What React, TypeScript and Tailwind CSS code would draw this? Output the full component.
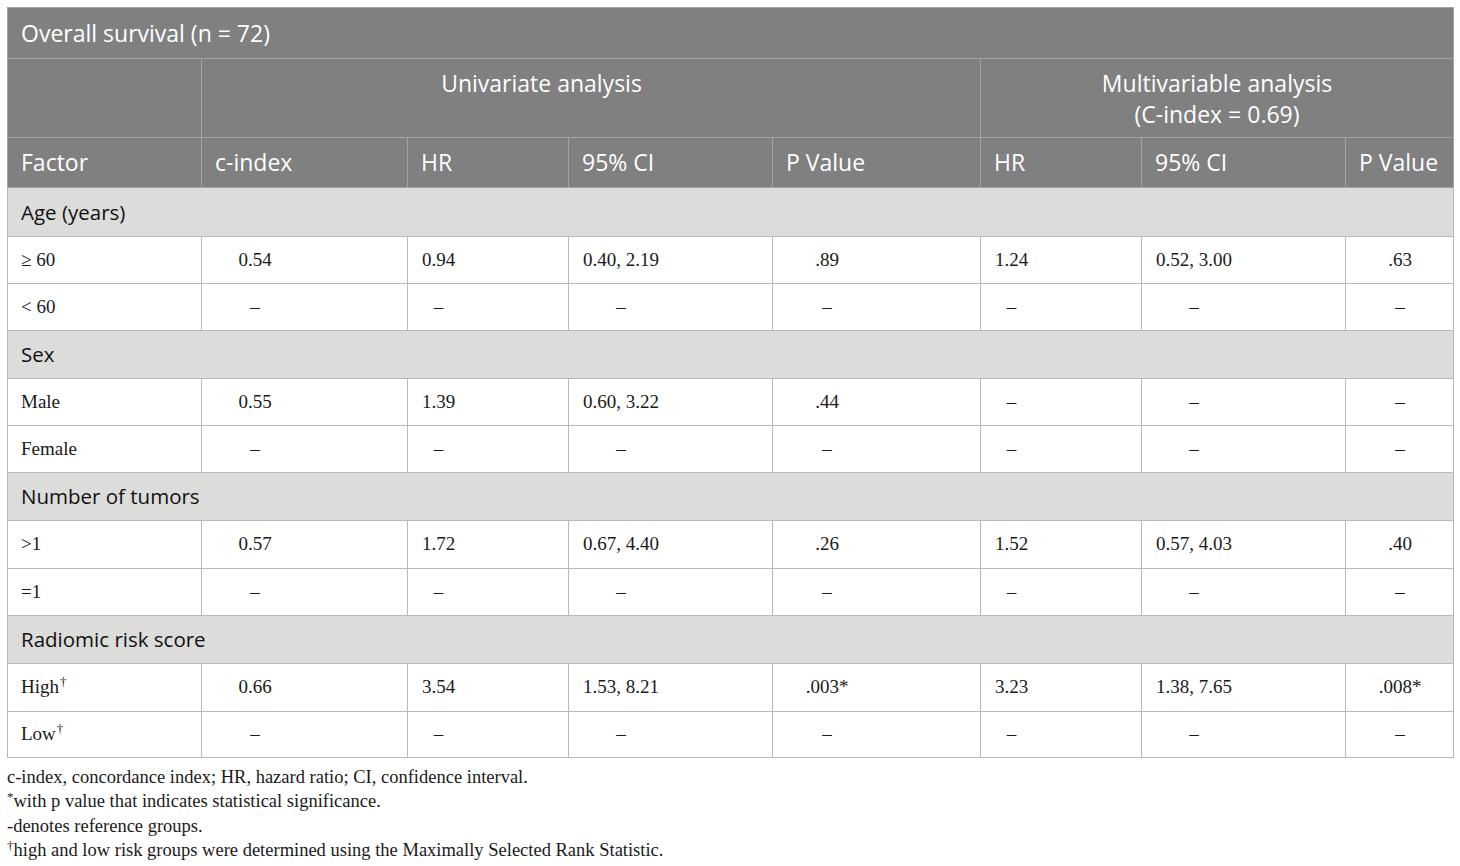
import React from "react";

const sans = { fontFamily: '"Open Sans", "Noto Sans", sans-serif' };
const serif = { fontFamily: '"Liberation Serif", "Times New Roman", serif' };

// inner width of the value box for each data column (values centred inside)
const boxW = ["w-[78px]", "w-[33px]", "w-[76px]", "w-[80px]", "w-[33px]", "w-[76px]", "w-[80px]"];

type Row = { label: React.ReactNode; values: string[]; h: string };
type Group = { title: string; h: string; rows: Row[] };

const dash = "–";

const Dagger = () => <sup className="text-[13px] -top-[7px] ml-[1px]">†</sup>;

const groups: Group[] = [
  {
    title: "Age (years)",
    h: "h-[49px]",
    rows: [
      { label: "≥ 60", values: ["0.54", "0.94", "0.40, 2.19", ".89", "1.24", "0.52, 3.00", ".63"], h: "h-[47px]" },
      { label: "< 60", values: [dash, dash, dash, dash, dash, dash, dash], h: "h-[47px]" },
    ],
  },
  {
    title: "Sex",
    h: "h-[48px]",
    rows: [
      { label: "Male", values: ["0.55", "1.39", "0.60, 3.22", ".44", dash, dash, dash], h: "h-[47px]" },
      { label: "Female", values: [dash, dash, dash, dash, dash, dash, dash], h: "h-[47px]" },
    ],
  },
  {
    title: "Number of tumors",
    h: "h-[48px]",
    rows: [
      { label: ">1", values: ["0.57", "1.72", "0.67, 4.40", ".26", "1.52", "0.57, 4.03", ".40"], h: "h-[48px]" },
      { label: "=1", values: [dash, dash, dash, dash, dash, dash, dash], h: "h-[47px]" },
    ],
  },
  {
    title: "Radiomic risk score",
    h: "h-[48px]",
    rows: [
      {
        label: (
          <>
            High
            <Dagger />
          </>
        ),
        values: ["0.66", "3.54", "1.53, 8.21", ".003*", "3.23", "1.38, 7.65", ".008*"],
        h: "h-[48px]",
      },
      {
        label: (
          <>
            Low
            <Dagger />
          </>
        ),
        values: [dash, dash, dash, dash, dash, dash, dash],
        h: "h-[46px]",
      },
    ],
  },
];

const darkCell = "border border-[#a3a3a3] bg-[#808080] text-white text-[23px] font-normal text-left align-middle pl-[13px]";

export default function App() {
  return (
    <div className="bg-white min-h-[866px] p-[7px]">
      <table className="border-collapse w-[1447px] table-fixed" style={sans}>
        <colgroup>
          <col className="w-[194px]" />
          <col className="w-[206px]" />
          <col className="w-[161px]" />
          <col className="w-[204px]" />
          <col className="w-[208px]" />
          <col className="w-[161px]" />
          <col className="w-[204px]" />
          <col className="w-[108px]" />
        </colgroup>
        <thead>
          <tr className="h-[51px]">
            <th colSpan={8} className={darkCell}>
              Overall survival (n = 72)
            </th>
          </tr>
          <tr className="h-[79px]">
            <th className={darkCell}></th>
            <th colSpan={4} className={`${darkCell} !align-top !text-center pt-[9px] pr-[112px] leading-[31px]`}>
              Univariate analysis
            </th>
            <th colSpan={3} className={`${darkCell} !align-top !text-center pt-[9px] !pl-0 leading-[31px]`}>
              Multivariable analysis
              <br />
              (C-index = 0.69)
            </th>
          </tr>
          <tr className="h-[50px]">
            {["Factor", "c-index", "HR", "95% CI", "P Value", "HR", "95% CI", "P Value"].map((t, i) => (
              <th key={i} className={darkCell}>
                {t}
              </th>
            ))}
          </tr>
        </thead>
        <tbody>
          {groups.map((g) => (
            <React.Fragment key={g.title}>
              <tr className={g.h}>
                <td colSpan={8} className="border border-[#b9b9b9] bg-[#dcdcdb] text-[#111] text-[20.5px] pl-[13px] align-middle">
                  {g.title}
                </td>
              </tr>
              {g.rows.map((r, ri) => (
                <tr key={ri} className={r.h}>
                  <td className="border border-[#b9b9b9] pl-[13px] text-[19px] text-[#1a1a1a] align-middle" style={serif}>
                    {r.label}
                  </td>
                  {r.values.map((v, vi) => (
                    <td key={vi} className="border border-[#b9b9b9] pl-[14px] text-[19px] text-[#1a1a1a] align-middle" style={serif}>
                      <span className={`inline-block text-center whitespace-nowrap ${boxW[vi]}`}>{v}</span>
                    </td>
                  ))}
                </tr>
              ))}
            </React.Fragment>
          ))}
        </tbody>
      </table>
      <div className="pt-[7px] text-[18.5px] leading-[24.4px] text-[#1a1a1a]" style={serif}>
        <p>c-index, concordance index; HR, hazard ratio; CI, confidence interval.</p>
        <p>
          <sup className="text-[13px] -top-[6px]">*</sup>with p value that indicates statistical significance.
        </p>
        <p>-denotes reference groups.</p>
        <p>
          <sup className="text-[13px] -top-[6px]">†</sup>high and low risk groups were determined using the Maximally Selected Rank Statistic.
        </p>
      </div>
    </div>
  );
}
